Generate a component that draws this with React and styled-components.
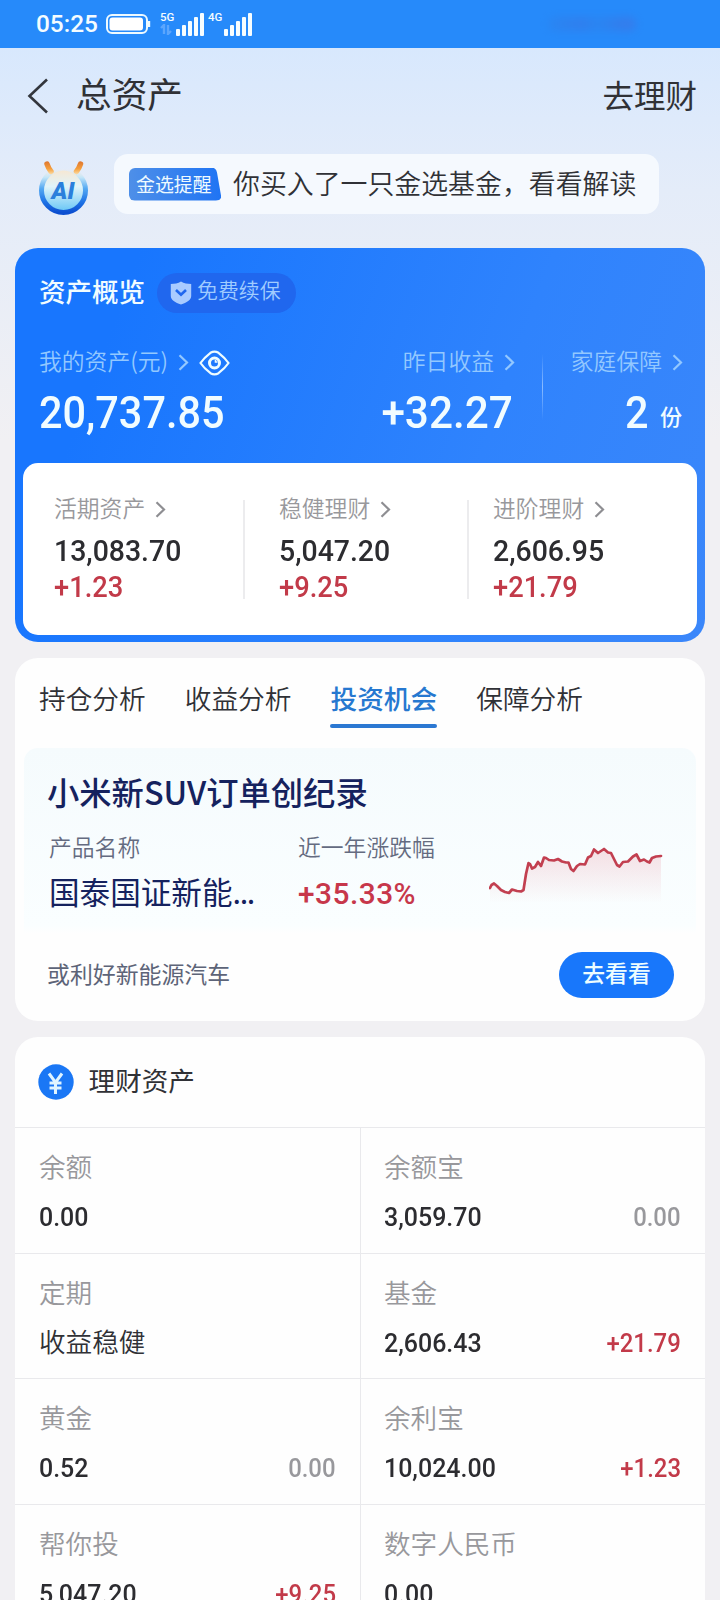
import styled, { createGlobalStyle } from "styled-components";

const GlobalStyle = createGlobalStyle`
  * {
    box-sizing: border-box;
  }

  body {
    margin: 0;
    font-family: "Noto Sans CJK SC", sans-serif;
    color: #303136;
    background: #f1f0f3;
  }
`;

const Page = styled.div`
  width: 720px;
  height: 1600px;
  overflow: hidden;
  background: linear-gradient(180deg, #d8e8fd 48px, #e4ecf9 190px, #f1f0f3 440px);
`;

const StatusBar = styled.div`
  display: flex;
  align-items: center;
  height: 48px;
  padding: 0 84px 0 36px;
  background: #268afa;
  color: #f4fcff;
  font-family: Roboto, sans-serif;
`;

const Clock = styled.span`
  width: 70px;
  font-size: 24.4px;
  font-weight: 500;
  line-height: 48px;
`;

const Smudge = styled.span`
  width: 88px;
  height: 14px;
  margin-left: auto;
  border-radius: 8px;
  background: linear-gradient(90deg, #2f7fe8, #3f6fdc 40%, #2f7fe8 55%, #4a68d6 90%);
  opacity: 0.4;
  filter: blur(4px);
`;

const NavBar = styled.header`
  display: flex;
  align-items: center;
  height: 96px;
  padding: 0 23px 0 27px;
`;

const NavTitle = styled.h1`
  margin: 0 0 0 27px;
  padding-bottom: 7px;
  font-size: 35.7px;
  font-weight: 400;
  line-height: 80px;
`;

const NavLink = styled.a`
  margin-left: auto;
  padding-bottom: 5px;
  font-size: 31.5px;
  line-height: 80px;
`;

const Notice = styled.section`
  display: flex;
  height: 104px;
  padding: 10px 0 0 36px;
`;

const Bubble = styled.div`
  display: flex;
  align-items: center;
  gap: 11px;
  width: 545px;
  height: 60px;
  margin-left: 22px;
  padding-left: 15px;
  border-radius: 14px;
  background: #f5f9fe;
  white-space: nowrap;
`;

const Tag = styled.span`
  width: 93px;
  height: 33px;
  padding-left: 7px;
  border-radius: 6px;
  background: linear-gradient(90deg, #4e8fe8, #1f74f4);
  clip-path: path("M5 0H82Q87 0 88 5L92 28Q93 33 87 33H5Q0 33 0 28V5Q0 0 5 0Z");
  color: #eefaff;
  font-size: 18.9px;
  line-height: 31px;
`;

const Message = styled.span`
  padding-bottom: 3px;
  font-size: 26.9px;
  font-weight: 350;
  line-height: 50px;
`;

const Overview = styled.section`
  height: 394px;
  margin: 0 15px 16px;
  padding: 25px 8px 0;
  border-radius: 23px;
  background: linear-gradient(110deg, #1876fe 15%, #2f83fd 65%, #3b87fa);
  color: #f1fcff;
`;

const OverviewHead = styled.div`
  display: flex;
  align-items: center;
  gap: 12px;
  height: 40px;
  padding-left: 16px;
`;

const OverviewTitle = styled.h2`
  margin: 0;
  padding-bottom: 4px;
  font-size: 26.5px;
  font-weight: 500;
  line-height: 36px;
`;

const Badge = styled.span`
  display: flex;
  align-items: center;
  gap: 5px;
  width: 139px;
  height: 40px;
  padding-left: 13px;
  border-radius: 20px;
  background: #2067ee;
  color: #a0ccff;
  font-size: 20.9px;
  font-weight: 350;
`;

const BadgeText = styled.span`
  padding-bottom: 8px;
  line-height: 28px;
`;

const Totals = styled.div`
  display: flex;
  height: 150px;
  padding: 31px 15px 0 16px;
`;

const Total = styled.div`
  display: flex;
  flex-direction: column;
  align-items: ${({ $right }) => ($right ? "flex-end" : "flex-start")};
  width: ${({ $width }) => $width}px;
`;

const Label = styled.div`
  display: flex;
  align-items: center;
  gap: 10px;
  height: 34px;
  margin-right: ${({ $shift }) => -($shift || 0)}px;
  color: ${({ $color }) => $color || "#98989c"};
  font-size: 22.8px;
  font-weight: 350;
  line-height: 36px;
  white-space: nowrap;

  svg {
    margin-top: ${({ $drop }) => $drop || 0}px;
  }
`;

const Num = styled.span`
  display: inline-block;
  color: ${({ $color }) => $color || "inherit"};
  font-family: Roboto, sans-serif;
  font-size: ${({ $size }) => $size}px;
  font-weight: 500;
  line-height: ${({ $line }) => $line}px;
  transform: scaleX(${({ $scale }) => $scale || 0.92});
  transform-origin: ${({ $right }) => ($right ? "right" : "left")} center;
  white-space: nowrap;
`;

const TotalDivider = styled.i`
  width: 1px;
  height: 66px;
  margin: 10px 0 0 29px;
  background: linear-gradient(180deg, transparent, #8bbcff, transparent);
`;

const Copies = styled.div`
  display: flex;
  align-items: flex-start;
  gap: 11px;
`;

const Unit = styled.span`
  font-size: 22px;
  font-weight: 500;
  line-height: 75px;
`;

const Breakdown = styled.div`
  display: flex;
  height: 172px;
  padding-top: 28px;
  border-radius: 15px;
  background: #fff;
`;

const BreakdownItem = styled.div`
  display: flex;
  flex-direction: column;
  align-items: flex-start;
  width: ${({ $width }) => $width}px;
  padding-left: ${({ $pad }) => $pad}px;
`;

const BreakdownDivider = styled.i`
  width: 2px;
  height: 99px;
  margin-top: 9px;
  background: #ececee;
`;

const Card = styled.section`
  height: ${({ $height }) => $height}px;
  margin: 0 15px 16px;
  border-radius: 23px;
  background: #fefefe;
  overflow: hidden;
`;

const Tabs = styled.nav`
  display: flex;
  gap: 39px;
  height: 90px;
  padding: 19px 0 0 24px;
`;

const Tab = styled.a`
  display: flex;
  flex-direction: column;
  color: ${({ $active }) => ($active ? "#2678d0" : "inherit")};
  font-size: 26.7px;
  font-weight: ${({ $active }) => ($active ? 500 : 350)};
  line-height: 41px;

  &::after {
    content: "";
    height: 4px;
    margin: 6px 0 0 -1px;
    border-radius: 2px;
    background: ${({ $active }) => ($active ? "#2b78d2" : "transparent")};
  }
`;

const Chance = styled.div`
  height: 272px;
  margin: 0 9px;
  padding: 20px 22px 0 23px;
  border-radius: 14px;
  background: linear-gradient(180deg, #f5fbfd, #fafeff 178px, #fefefe 186px);
`;

const ChanceTitle = styled.h3`
  margin: 0;
  color: #15225e;
  font-size: 32.3px;
  font-weight: 500;
  line-height: 46px;
`;

const ChanceBody = styled.div`
  display: flex;
  height: 117px;
  padding: 16px 0 0 2px;
`;

const ChanceCol = styled.div`
  width: ${({ $width }) => $width}px;
`;

const Fund = styled.div`
  color: #15225e;
  font-size: 30.6px;
  line-height: 55px;
`;

const Dots = styled.span`
  letter-spacing: -1.4px;
`;

const Rate = styled.div`
  color: #c7374a;
  font-family: Roboto, sans-serif;
  font-size: 29.8px;
  font-weight: 500;
  letter-spacing: 0.5px;
  line-height: 60px;
`;

const ChanceFoot = styled.div`
  display: flex;
  align-items: center;
  justify-content: space-between;
  height: 46px;
  margin-top: 21px;
  color: #5d6478;
  font-size: 22.9px;
`;

const FootText = styled.span`
  padding-bottom: 4px;
  line-height: 42px;
`;

const Button = styled.button`
  width: 115px;
  height: 46px;
  padding: 0 0 4px;
  border: 0;
  border-radius: 23px;
  background: #1877fb;
  color: #edfdff;
  font-family: inherit;
  font-size: 22.8px;
  font-weight: 500;
  line-height: 40px;
`;

const WealthHead = styled.div`
  display: flex;
  align-items: center;
  gap: 15px;
  height: 90px;
  padding: 0 0 1px 22.6px;
`;

const WealthTitle = styled.h2`
  margin: 0;
  padding-bottom: 4px;
  font-size: 26.6px;
  font-weight: 400;
  line-height: 40px;
`;

const Grid = styled.div`
  display: grid;
  grid-template-columns: 345px 345px;
`;

const Cell = styled.div`
  height: 125.7px;
  padding: 20px 24px 0 ${({ $odd }) => ($odd ? 24 : 23)}px;
  border-top: 1px solid #e9e9ec;
  border-left: ${({ $odd }) => ($odd ? "0" : "1px solid #e9e9ec")};
`;

const CellName = styled.div`
  color: #98989c;
  font-size: 26.6px;
  font-weight: 350;
  line-height: 36px;
`;

const CellValues = styled.div`
  display: flex;
  align-items: center;
  justify-content: space-between;
  height: 40px;
  margin-top: 13px;
`;

const CellText = styled.span`
  padding-bottom: 3px;
  font-size: 26.6px;
  font-weight: 350;
  line-height: 38px;
`;

const Chevron = ({ color }) => (
  <svg width="11" height="17" viewBox="0 0 11 17" fill="none">
    <path d="M1.5 1.2 9 8.5 1.5 15.8" stroke={color} strokeWidth="2.2" />
  </svg>
);

const Battery = () => (
  <svg width="46" height="22" viewBox="0 0 46 22" fill="none">
    <rect x="1" y="2" width="40" height="18" rx="5" stroke="#eefaff" strokeWidth="2" />
    <rect x="3.5" y="4.5" width="33.5" height="13" rx="3" fill="#fff" />
    <path d="M43 8v6" stroke="#eefaff" strokeWidth="2.4" />
  </svg>
);

const SignalBox = styled.span`
  display: flex;
  align-items: flex-end;
  gap: 1px;
  height: 24px;
  margin-left: ${({ $left }) => $left}px;
`;

const Net = styled.span`
  display: flex;
  flex-direction: column;
  gap: 2px;
  width: 15px;
  height: 24px;
  font-size: 11.5px;
  font-weight: 500;
  line-height: 10px;
`;

const Signal = ({ label, left, arrows }) => (
  <SignalBox $left={left}>
    <Net>
      {label}
      {arrows && (
        <svg width="13" height="11" viewBox="0 0 13 11" fill="none">
          <path d="M1 4 4 1v9M8 1v9l3-3" stroke="#5ba6fd" strokeWidth="2.4" />
        </svg>
      )}
    </Net>
    <svg width="29" height="24" viewBox="0 0 29 24" fill="#f6fdff">
      <rect x="0" y="17" width="4" height="7" rx="1" />
      <rect x="6" y="13" width="4" height="11" rx="1" />
      <rect x="12" y="9" width="4" height="15" rx="1" />
      <rect x="18" y="5" width="4" height="19" rx="1" />
      <rect x="24" y="1" width="4" height="23" rx="1" />
    </svg>
  </SignalBox>
);

const BotIcon = () => (
  <svg width="56" height="62" viewBox="0 0 56 62" fill="none">
    <defs>
      <linearGradient id="ring" x1="0" y1="0" x2="0" y2="1">
        <stop offset="0" stopColor="#f7ecdc" stopOpacity="0" />
        <stop offset="0.2" stopColor="#c4e6f8" />
        <stop offset="0.45" stopColor="#56aaf2" />
        <stop offset="0.75" stopColor="#1f74e6" />
        <stop offset="1" stopColor="#0c4fd0" />
      </linearGradient>
      <linearGradient id="face" x1="0" y1="0" x2="0" y2="1">
        <stop offset="0" stopColor="#f6e8d4" />
        <stop offset="0.4" stopColor="#e0f4fa" />
        <stop offset="1" stopColor="#6cc8f6" />
      </linearGradient>
      <linearGradient id="ear" gradientUnits="userSpaceOnUse" x1="0" y1="7" x2="0" y2="20">
        <stop offset="0" stopColor="#dd742f" />
        <stop offset="0.6" stopColor="#f59f3c" />
        <stop offset="1" stopColor="#fbd9a0" />
      </linearGradient>
    </defs>
    <circle cx="27.5" cy="36.5" r="20" fill="url(#face)" />
    <circle cx="27.5" cy="36.5" r="22" stroke="url(#ring)" strokeWidth="5" />
    <path
      d="M11 10Q12.500 14.500 15 17.500M44.500 10Q43 14.500 40.500 17.500"
      stroke="url(#ear)"
      strokeWidth="5.500"
      strokeLinecap="round"
    />
    <text
      x="27"
      y="44.5"
      textAnchor="middle"
      fill="#2a80dc"
      fontFamily="Roboto, sans-serif"
      fontSize="24"
      fontWeight="900"
      fontStyle="italic"
    >
      AI
    </text>
  </svg>
);

const Shield = () => (
  <svg width="22" height="24" viewBox="0 0 22 24" fill="none">
    <path
      d="M11 .5C8 2.300 4.500 3 .8 3v12c0 4 4.500 6.500 10.200 8.500C16.700 21.500 21.200 19 21.200 15V3C17.500 3 14 2.300 11 .5Z"
      fill="#a9cbff"
    />
    <path d="m6 9 5 4.800L16 9" stroke="#2067ee" strokeWidth="2.600" />
  </svg>
);

const Eye = () => (
  <svg width="31" height="26" viewBox="0 0 31 26" fill="none" stroke="#eefcff">
    <path
      d="M1.500 13C3.500 10 8 5.500 11.500 2.800Q15.500.4 19.500 2.800C23 5.500 27.500 10 29.500 13c-2 3-6.500 7.500-10 10.200q-4 2.400-8 0C8 20.500 3.500 16 1.500 13Z"
      strokeWidth="2.200"
    />
    <circle cx="15.500" cy="13" r="5" strokeWidth="3" />
    <path d="M16.500 10V12H18.500" strokeWidth="1.600" />
  </svg>
);

const Yen = () => (
  <svg width="36" height="36" viewBox="0 0 36 36" fill="none">
    <circle cx="18" cy="18" r="17.700" fill="#1a77f5" />
    <path
      d="m11 9.500 6.500 9 6.500-9M11.500 19h12M11.500 24h12M17.500 18v12"
      stroke="#e0f4ff"
      strokeWidth="3"
    />
  </svg>
);

const trend =
  "M1 41 2.500 38 5 36.500 8 39 12 43 16 45 20 46 23 42.500 28 44 32 44.500 34.500 43 37 27 39.500 16 41 17 43 21.500 46 20 49 15 52 19 55 10.500 57 11 60 13 65 13.500 69 12 73 14.500 77 15.500 79.500 15.500 82 22 84.500 24 88 19 91 17 96 17.500 99 10.500 102 9 105 2.500 109 6 112 4 115 2 119 5.500 122 6 125 12 128 18 130.500 19.500 134 15 139 14.500 144 9.500 147.500 7.500 151 14 155 12.500 158 14.500 160.500 15.500 163 11 167 9.500 172 9";

const TrendBox = styled.svg`
  flex: none;
  margin-top: 17px;
`;

const Trend = () => (
  <TrendBox width="175" height="60" viewBox="0 0 175 60" fill="none">
    <defs>
      <linearGradient id="area" x1="0" y1="0" x2="0" y2="1">
        <stop offset="0" stopColor="#e0566a" stopOpacity="0.180" />
        <stop offset="1" stopColor="#e0566a" stopOpacity="0" />
      </linearGradient>
    </defs>
    <path d={`${trend}V56H1Z`} fill="url(#area)" />
    <path
      d={trend}
      stroke="#c23f50"
      strokeWidth="2.700"
      strokeLinecap="round"
      strokeLinejoin="round"
    />
  </TrendBox>
);

const breakdown = [
  { name: "活期资产", value: "13,083.70", gain: "+1.23", width: 220, pad: 31 },
  { name: "稳健理财", value: "5,047.20", gain: "+9.25", width: 222, pad: 34 },
  { name: "进阶理财", value: "2,606.95", gain: "+21.79", width: 228, pad: 24 },
];

const assets = [
  { name: "余额", value: "0.00" },
  { name: "余额宝", value: "3,059.70", gain: "0.00" },
  { name: "定期", text: "收益稳健" },
  { name: "基金", value: "2,606.43", gain: "+21.79" },
  { name: "黄金", value: "0.52", gain: "0.00" },
  { name: "余利宝", value: "10,024.00", gain: "+1.23" },
  { name: "帮你投", value: "5,047.20", gain: "+9.25" },
  { name: "数字人民币", value: "0.00" },
];

const tabs = ["持仓分析", "收益分析", "投资机会", "保障分析"];

const dark = "#2c2c30";
const grey = "#98989c";
const soft = "#93c8ff";
const red = "#c23a49";

export default function App() {
  return (
    <Page>
      <GlobalStyle />
      <StatusBar>
        <Clock>05:25</Clock>
        <Battery />
        <Signal label="5G" left={8} arrows />
        <Signal label="4G" left={3} />
        <Smudge />
      </StatusBar>

      <NavBar>
        <svg width="22" height="36" viewBox="0 0 22 36" fill="none">
          <path d="M20 1.500 2.500 18 20 34.500" stroke="#33363d" strokeWidth="2.600" />
        </svg>
        <NavTitle>总资产</NavTitle>
        <NavLink>去理财</NavLink>
      </NavBar>

      <Notice>
        <BotIcon />
        <Bubble>
          <Tag>金选提醒</Tag>
          <Message>你买入了一只金选基金，看看解读</Message>
        </Bubble>
      </Notice>

      <Overview>
        <OverviewHead>
          <OverviewTitle>资产概览</OverviewTitle>
          <Badge>
            <Shield />
            <BadgeText>免费续保</BadgeText>
          </Badge>
        </OverviewHead>
        <Totals>
          <Total $width={240}>
            <Label $color={soft} $drop={3}>
              我的资产(元)
              <Chevron color={soft} />
              <Eye />
            </Label>
            <Num $size={45} $line={70}>20,737.85</Num>
          </Total>
          <Total $width={234} $right>
            <Label $color={soft} $drop={3} $shift={2}>
              昨日收益
              <Chevron color={soft} />
            </Label>
            <Num $size={45} $line={70} $scale={0.94} $right>
              +32.27
            </Num>
          </Total>
          <TotalDivider />
          <Total $width={139} $right>
            <Label $color={soft} $drop={3} $shift={1}>
              家庭保障
              <Chevron color={soft} />
            </Label>
            <Copies>
              <Num $size={45} $line={70} $right>2</Num>
              <Unit>份</Unit>
            </Copies>
          </Total>
        </Totals>
        <Breakdown>
          {breakdown.map((item, i) => [
            i > 0 && <BreakdownDivider key={`line-${i}`} />,
            <BreakdownItem key={item.name} $width={item.width} $pad={item.pad}>
              <Label $drop={3}>
                {item.name}
                <Chevron color="#8e8e92" />
              </Label>
              <Num $size={29} $line={52} $scale={0.98} $color={dark}>
                {item.value}
              </Num>
              <Num $size={29} $line={21} $scale={0.94} $color={red}>
                {item.gain}
              </Num>
            </BreakdownItem>,
          ])}
        </Breakdown>
      </Overview>

      <Card $height={363}>
        <Tabs>
          {tabs.map((tab) => (
            <Tab key={tab} $active={tab === "投资机会"}>
              {tab}
            </Tab>
          ))}
        </Tabs>
        <Chance>
          <ChanceTitle>小米新SUV订单创纪录</ChanceTitle>
          <ChanceBody>
            <ChanceCol $width={249}>
              <Label $color="#646b80">产品名称</Label>
              <Fund>
                国泰国证新能<Dots>...</Dots>
              </Fund>
            </ChanceCol>
            <ChanceCol $width={191}>
              <Label $color="#646b80">近一年涨跌幅</Label>
              <Rate>+35.33%</Rate>
            </ChanceCol>
            <Trend />
          </ChanceBody>
          <ChanceFoot>
            <FootText>或利好新能源汽车</FootText>
            <Button>去看看</Button>
          </ChanceFoot>
        </Chance>
      </Card>

      <Card $height={640}>
        <WealthHead>
          <Yen />
          <WealthTitle>理财资产</WealthTitle>
        </WealthHead>
        <Grid>
          {assets.map((asset, i) => (
            <Cell key={asset.name} $odd={i % 2 === 0}>
              <CellName>{asset.name}</CellName>
              <CellValues>
                {asset.text ? (
                  <CellText>{asset.text}</CellText>
                ) : (
                  <Num $size={26} $line={40} $scale={0.96} $color={dark}>
                    {asset.value}
                  </Num>
                )}
                {asset.gain && (
                  <Num $size={26} $line={40} $right $color={asset.gain === "0.00" ? grey : red}>
                    {asset.gain}
                  </Num>
                )}
              </CellValues>
            </Cell>
          ))}
        </Grid>
      </Card>
    </Page>
  );
}
